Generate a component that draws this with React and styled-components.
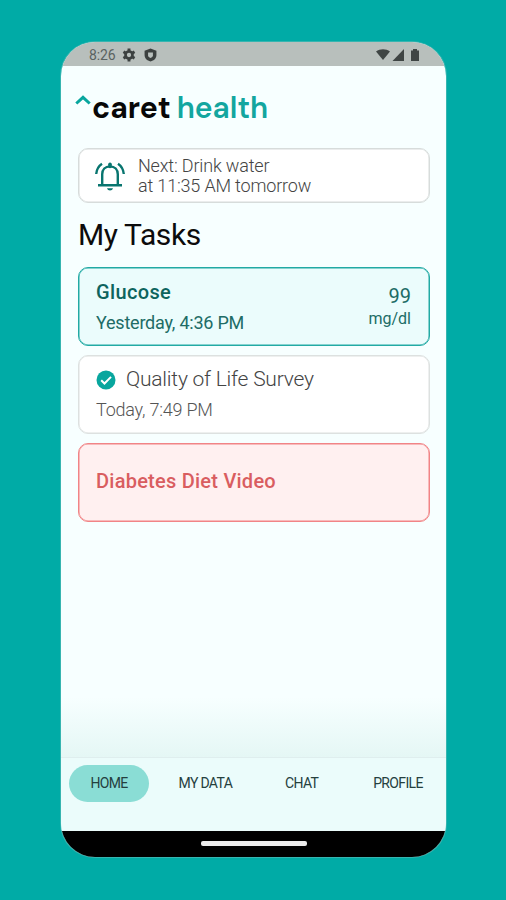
import React from "react";
import styled, { createGlobalStyle } from "styled-components";

const GlobalStyle = createGlobalStyle`
  * {
    box-sizing: border-box;
  }
  body {
    margin: 0;
    background-color: #00aba6;
    font-family: Roboto, sans-serif;
  }
`;

const tabs = ["HOME", "MY DATA", "CHAT", "PROFILE"];

const GearIcon = () => (
  <svg width="14" height="14" viewBox="0 0 24 24" fill="none" stroke="#3c4140">
    <circle cx="12" cy="12" r="6" strokeWidth="4.6" />
    <path
      d="M12 1v5M12 18v5M2.5 6.5l4.3 2.5M17.2 15l4.3 2.5M2.5 17.5L6.8 15M17.2 9l4.3-2.5"
      strokeWidth="5"
    />
  </svg>
);

const ShieldIcon = () => (
  <svg width="13" height="14" viewBox="0 0 24 26">
    <path d="M12 1L1 5v8c0 6 4.500 10.500 11 12 6.500-1.500 11-6 11-12V5z" fill="#3c4140" />
    <path d="M7.500 8.500h9v5c0 2.500-2 4-4.500 5-2.500-1-4.500-2.500-4.500-5z" fill="#b8bfbc" />
  </svg>
);

const SignalIcons = () => (
  <svg width="44" height="14" viewBox="0 0 44 14" fill="#3f4544">
    <path d="M0 3.500C4 .5 10 .5 14 3.500L7 12z" />
    <path d="M28 1v12H16.500z" />
    <path d="M35 2.500h2V1h4v1.500h2V13h-8z" />
  </svg>
);

const BellIcon = () => (
  <svg width="30" height="30" viewBox="0 0 30 30" fill="none" stroke="#08756f" strokeWidth="2.400">
    <path d="M3 24.300h24" />
    <path d="M7.200 24.500V13.300c0-4.500 3-7.900 7.800-7.900s7.800 3.400 7.800 7.900v11.200" />
    <path d="M15 3.200v2.300" strokeWidth="3.600" strokeLinecap="round" />
    <path d="M1.200 13C1.600 8.500 3.500 5.200 7 2.800M28.800 13C28.400 8.500 26.500 5.200 23 2.800" />
    <path d="M12 27.200h6c-.5 1.700-1.600 2.200-3 2.200s-2.500-.5-3-2.200z" fill="#08756f" stroke="none" />
  </svg>
);

const CheckIcon = () => (
  <svg width="20" height="20" viewBox="0 0 20 20">
    <circle cx="10" cy="10" r="9.500" fill="#08a69e" />
    <path d="M5.200 10.200l3.300 3.300 6.500-6.600" fill="none" stroke="#fff" strokeWidth="2" />
  </svg>
);

export default function App() {
  return (
    <>
      <GlobalStyle />
      <Page>
        <Phone>
          <StatusBar>
            <Clock>8:26</Clock>
            <GearIcon />
            <ShieldIcon />
            <Spacer />
            <SignalIcons />
          </StatusBar>
          <Content>
            <Logo>
              <Caret width="16" height="10" viewBox="0 0 16 10">
                <path d="M1.300 8.500L8 2.300l6.700 6.200" fill="none" stroke="#08a69e" strokeWidth="3" />
              </Caret>
              <LogoDark>caret</LogoDark>
              <LogoTeal>health</LogoTeal>
            </Logo>
            <Reminder>
              <BellIcon />
              <ReminderText>
                Next: Drink water
                <br />
                at 11:35 AM tomorrow
              </ReminderText>
            </Reminder>
            <Heading>My Tasks</Heading>
            <TaskList>
              <Task $border="#22aaa4" $background="#ebfcfc">
                <TaskInfo>
                  <TaskName $color="#0d645e" $spacing="0.35px">Glucose</TaskName>
                  <TaskTime $color="#206c66">Yesterday, 4:36 PM</TaskTime>
                </TaskInfo>
                <Reading>
                  <Value>99</Value>
                  <Unit>mg/dl</Unit>
                </Reading>
              </Task>
              <Task $border="#dde1e0" $background="#ffffff">
                <TaskInfo>
                  <TaskName $color="#444444" $spacing="-0.22px" $light>
                    <CheckIcon />
                    Quality of Life Survey
                  </TaskName>
                  <TaskTime $color="#555555" $light>Today, 7:49 PM</TaskTime>
                </TaskInfo>
              </Task>
              <Task $border="#f18486" $background="#fff0f0" $center>
                <TaskName $color="#d95d60" $spacing="0.24px">Diabetes Diet Video</TaskName>
              </Task>
            </TaskList>
          </Content>
          <TabBar>
            {tabs.map((tab, i) => (
              <Tab key={tab} $active={i === 0}>
                {tab}
              </Tab>
            ))}
          </TabBar>
          <SystemBar>
            <HomeHandle />
          </SystemBar>
        </Phone>
      </Page>
    </>
  );
}

const Page = styled.div`
  width: 506px;
  height: 900px;
  padding: 42px 60px 0 61px;
  background-color: #00aba6;
  overflow: hidden;
`;
const Phone = styled.div`
  width: 385px;
  height: 815px;
  display: flex;
  flex-direction: column;
  overflow: hidden;
  border-radius: 34px;
  background: linear-gradient(#f7ffff 0, #f7ffff 655px, #e5f7f5 715px);
  box-shadow: 0 0 0 1px #36b5b0;
`;
const StatusBar = styled.div`
  height: 24px;
  flex-shrink: 0;
  display: flex;
  align-items: center;
  gap: 8px;
  padding: 1px 26px 0 28px;
  background-color: #b8bfbc;
`;
const Clock = styled.span`
  width: 25px;
  font-size: 14px;
  line-height: 16px;
  letter-spacing: -0.1px;
  white-space: nowrap;
  color: #5b6361;
`;
const Spacer = styled.div`
  flex: 1;
`;
const Content = styled.main`
  flex: 1;
  padding: 25px 16px 0 17px;
`;
const Logo = styled.div`
  height: 34px;
  display: flex;
  align-items: flex-start;
  margin-left: -3px;
  font-family: "DM Sans", Inter, sans-serif;
  font-size: 30px;
  line-height: 34px;
`;
const Caret = styled.svg`
  flex-shrink: 0;
  margin: 4px 1px 0 0;
`;
const LogoDark = styled.span`
  font-weight: 700;
  color: #080808;
`;
const LogoTeal = styled.span`
  margin-left: 6px;
  font-weight: 600;
  color: #13a69f;
`;
const Reminder = styled.section`
  height: 55px;
  margin-top: 23px;
  display: flex;
  align-items: center;
  gap: 13px;
  padding: 0 16px;
  border: 1.5px solid #d7dcdb;
  border-radius: 10px;
  background-color: #ffffff;
  box-shadow: inset 0 0 0 0.5px #d7dcdb;
`;
const ReminderText = styled.p`
  margin: 1px 0 0;
  font-size: 18px;
  font-weight: 300;
  line-height: 20.5px;
  letter-spacing: -0.17px;
  color: #444444;
`;
const Heading = styled.h1`
  margin: 13px 0 0;
  font-size: 30px;
  font-weight: 400;
  line-height: 38px;
  letter-spacing: -0.4px;
  color: #0c0c0c;
`;
const TaskList = styled.div`
  display: grid;
  gap: 9.5px;
  margin-top: 13px;
`;
const Task = styled.article`
  height: 78.5px;
  display: flex;
  justify-content: space-between;
  align-items: ${(p) => (p.$center ? "center" : "flex-start")};
  padding: ${(p) => (p.$center ? "0 17px 3px" : "11px 17px 0")};
  border: 1.5px solid ${(p) => p.$border};
  border-radius: 10px;
  background-color: ${(p) => p.$background};
  box-shadow: inset 0 0 0 0.5px ${(p) => p.$border};
`;
const TaskInfo = styled.div`
  display: grid;
  gap: 7px;
`;
const TaskName = styled.div`
  display: flex;
  align-items: center;
  gap: 10px;
  font-size: ${(p) => (p.$light ? 21 : 20)}px;
  font-weight: ${(p) => (p.$light ? 300 : 500)};
  line-height: ${(p) => (p.$light ? 25 : 26)}px;
  letter-spacing: ${(p) => p.$spacing || 0};
  color: ${(p) => p.$color};
`;
const TaskTime = styled.div`
  font-size: 18px;
  font-weight: ${(p) => (p.$light ? 300 : 400)};
  line-height: 22px;
  letter-spacing: -0.22px;
  color: ${(p) => p.$color};
`;
const Reading = styled.div`
  display: grid;
  justify-items: end;
  padding: 4px 1px 0 0;
  color: #206c66;
`;
const Value = styled.div`
  font-size: 20px;
  line-height: 26px;
`;
const Unit = styled.div`
  font-size: 16px;
  line-height: 20px;
`;
const TabBar = styled.nav`
  height: 74px;
  flex-shrink: 0;
  display: grid;
  grid-template-columns: repeat(4, 80px);
  justify-content: space-between;
  padding: 7px 8px 0;
  border-top: 1px solid #dfeeee;
  background-color: #ebfcfb;
`;
const Tab = styled.div`
  height: 37px;
  display: flex;
  align-items: center;
  justify-content: center;
  padding-bottom: 1px;
  border-radius: 19px;
  font-size: 14px;
  letter-spacing: -0.65px;
  color: #25403e;
  background-color: ${(p) => (p.$active ? "#8addd5" : "transparent")};
`;
const SystemBar = styled.div`
  height: 26px;
  flex-shrink: 0;
  display: flex;
  justify-content: center;
  padding-top: 10px;
  background-color: #000000;
`;
const HomeHandle = styled.div`
  width: 106px;
  height: 5px;
  border-radius: 2px;
  background-color: #ececec;
`;
